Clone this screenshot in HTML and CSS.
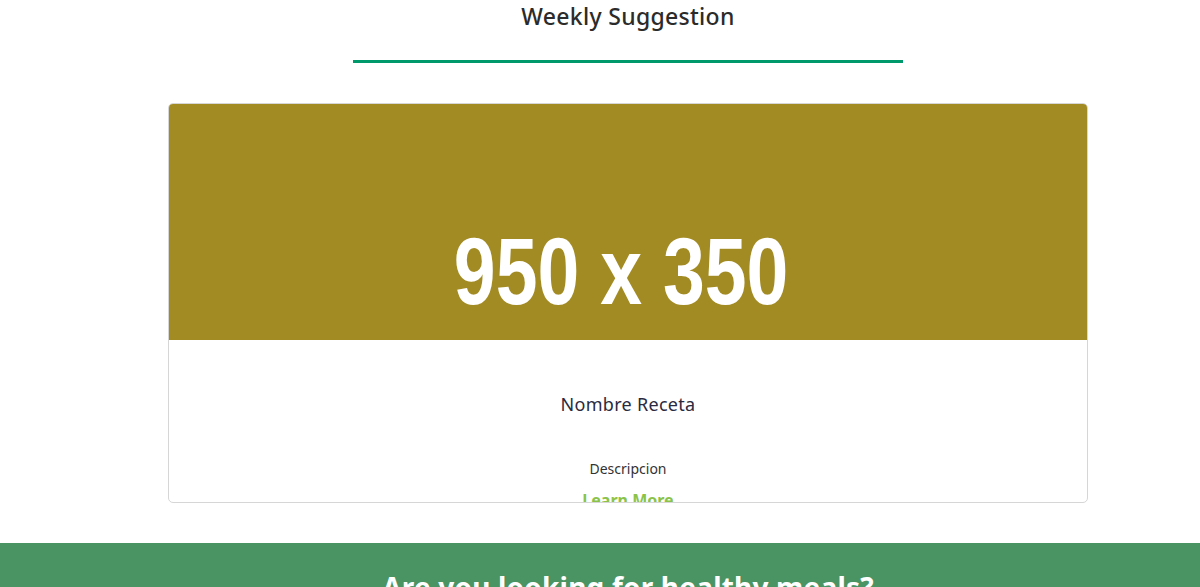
FILE: index.html
```html
<!DOCTYPE html>
<html lang="es">
<head>
<meta charset="utf-8">
<title>Weekly Suggestion</title>
<link rel="stylesheet" href="styles.css">
</head>
<body>
<section class="weekly">
  <h2 class="weekly-title">Weekly Suggestion</h2>
  <div class="weekly-rule"></div>
  <div class="card">
    <div class="card-img"><span class="ph-text">950 x 350</span></div>
    <div class="card-body">
      <h5 class="card-title">Nombre Receta</h5>
      <p class="card-text">Descripcion</p>
      <a class="card-link" href="#">Learn More</a>
    </div>
  </div>
</section>
<section class="cta">
  <h2 class="cta-title">Are you looking for healthy meals?</h2>
</section>
</body>
</html>
```

FILE: styles.css
```css
* { box-sizing: border-box; }
html, body { margin: 0; padding: 0; }
body {
  font-family: "Noto Sans", "Open Sans", sans-serif;
  color: #333;
  background: #fff;
  overflow: hidden;
}
.weekly {
  display: flex;
  flex-direction: column;
  align-items: center;
  padding: 0 0 40px 56px;
}
.weekly-title {
  margin: 1px 0 0;
  font-size: 23px;
  font-weight: 500;
  line-height: 30px;
  color: #2b2b2b;
  letter-spacing: 0.3px;
}
.weekly-rule {
  width: 550px;
  height: 3px;
  background: #00996b;
  margin-top: 29px;
}
.card {
  margin-top: 40px;
  width: 920px;
  height: 400px;
  border: 1px solid #d6d6d6;
  border-radius: 5px;
  overflow: hidden;
}
.card-img {
  height: 236px;
  background: #a38b24;
  display: flex;
  justify-content: center;
  padding: 113px 13px 0 0;
}
.ph-text {
  display: inline-block;
  font-family: "Liberation Sans", Arial, sans-serif;
  font-weight: 700;
  font-size: 94px;
  line-height: 110px;
  color: #fff;
  transform: scaleX(0.8);
  height: 110px;
}
.card-body {
  display: flex;
  flex-direction: column;
  align-items: center;
  padding-top: 52px;
}
.card-title {
  margin: 0;
  font-size: 18px;
  font-weight: 400;
  line-height: 24px;
  color: #2a2a40;
  letter-spacing: 0.3px;
}
.card-text {
  margin: 44px 0 0;
  font-size: 14px;
  line-height: 18px;
  color: #333;
}
.card-link {
  margin-top: 11px;
  font-size: 16px;
  font-weight: 700;
  line-height: 22px;
  color: #8bc34a;
  text-decoration: none;
}
.cta {
  background: #4a9463;
  display: flex;
  justify-content: center;
  padding: 24px 0 0 56px;
  height: 200px;
}
.cta-title {
  margin: 0;
  font-size: 28px;
  font-weight: 700;
  line-height: 40px;
  color: #fff;
  letter-spacing: 0.2px;
}
```
